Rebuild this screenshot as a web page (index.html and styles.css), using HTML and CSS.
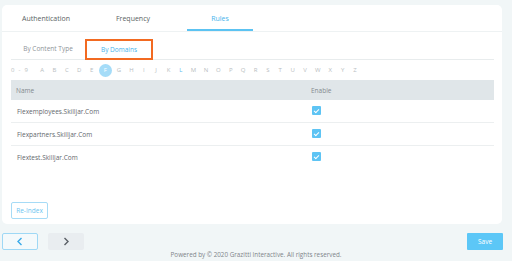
FILE: index.html
```html
<html>
<head>
<meta charset="utf-8">
<link rel="stylesheet" href="styles.css">
</head>
<body>
<div class="card">
	<div class="tabs">
		<div class="tab">Authentication</div>
		<div class="tab">Frequency</div>
		<div class="tab active">Rules</div>
	</div>
	<div class="content">
		<div class="subtabs">
			<div class="subtab">By Content Type</div>
			<div class="subtab current">By Domains</div>
		</div>
		<div class="letters">
			<span class="digits">0 - 9</span>
			<span>A</span><span>B</span><span>C</span><span>D</span><span>E</span>
			<span class="picked">F</span>
			<span>G</span><span>H</span><span>I</span><span>J</span><span>K</span>
			<span class="has">L</span>
			<span>M</span><span>N</span><span>O</span><span>P</span><span>Q</span><span>R</span><span>S</span><span>T</span><span>U</span><span>V</span><span>W</span><span>X</span><span>Y</span><span>Z</span>
		</div>
		<div class="table">
			<div class="row head"><div class="name">Name</div><div class="enable">Enable</div></div>
			<div class="row"><div class="name">Flexemployees.Skilljar.Com</div><div class="enable"><span class="check"></span></div></div>
			<div class="row"><div class="name">Flexpartners.Skilljar.Com</div><div class="enable"><span class="check"></span></div></div>
			<div class="row last"><div class="name">Flextest.Skilljar.Com</div><div class="enable"><span class="check"></span></div></div>
		</div>
		<button class="reindex">Re-Index</button>
	</div>
</div>
<div class="actions">
	<div class="nav">
		<button class="prev"><svg width="8" height="9" viewBox="0 0 8 9"><polyline points="5.5,1 2,4.5 5.5,8" fill="none" stroke="#3aa9e8" stroke-width="1.4"/></svg></button>
		<button class="next"><svg width="8" height="9" viewBox="0 0 8 9"><polyline points="2.5,1 6,4.5 2.5,8" fill="none" stroke="#5a5f66" stroke-width="1.4"/></svg></button>
	</div>
	<button class="save">Save</button>
</div>
<div class="footer">Powered by © 2020 Grazitti Interactive. All rights reserved.</div>
</body>
</html>
```

FILE: styles.css
```css
body {
	margin: 0;
	background-color: #f1f6f7;
	font-family: 'Open Sans', sans-serif;
	font-size: 6.5px;
	color: #5f6469;
}
button {
	font-family: 'Open Sans', sans-serif;
	cursor: pointer;
}

.card {
	display: flex;
	flex-direction: column;
	box-sizing: border-box;
	margin: 5px 0 0 2px;
	width: 500px;
	height: 219px;
	padding-bottom: 5px;
	background-color: #ffffff;
	border-radius: 5px;
}

.tabs {
	display: flex;
	gap: 21px;
	height: 26px;
	padding-left: 11px;
	border-bottom: 1px solid #eef2f3;
}
.tab {
	display: flex;
	align-items: center;
	justify-content: center;
	box-sizing: border-box;
	width: 66px;
	font-size: 7px;
	color: #5a5f64;
}
.tab.active {
	color: #45b3ec;
	border-bottom: 2px solid #5cc3f2;
	padding-top: 2px;
}

.content {
	display: flex;
	flex-direction: column;
	flex: 1;
	padding: 0 8px 0 9px;
}

.subtabs {
	display: flex;
	align-items: flex-end;
	height: 27px;
	border-bottom: 1px solid #e8eced;
}
.subtab {
	display: flex;
	align-items: center;
	justify-content: center;
	box-sizing: border-box;
	width: 74px;
	height: 21px;
	color: #8f9499;
}
.subtab.current {
	width: 68px;
	margin-bottom: -1px;
	border: 2px solid #f26a21;
	color: #45b3ec;
}

.letters {
	display: flex;
	align-items: center;
	height: 20px;
	color: #b8bdc1;
	font-size: 6px;
}
.letters span {
	display: flex;
	align-items: center;
	justify-content: center;
	min-width: 5px;
	margin: 0 3.7px;
}
.letters .digits {
	margin: 0 8px 0 0;
	word-spacing: 2.5px;
}
.letters .picked {
	width: 13px;
	height: 13px;
	margin: 0 1px;
	border-radius: 50%;
	background-color: #a5dcf8;
	color: #ffffff;
}
.letters .has {
	color: #5bbdf0;
}

.table {
	display: flex;
	flex-direction: column;
}
.row {
	display: flex;
	align-items: center;
	height: 22px;
	border-bottom: 1px solid #eceff0;
	color: #63686d;
}
.row.last {
	border-bottom: none;
}
.row.head {
	height: 20px;
	border-bottom: none;
	background-color: #e0e6e9;
	color: #83898e;
}
.name {
	width: 289px;
	padding-left: 6px;
}
.row.head .name {
	padding-left: 5px;
}
.enable {
	display: flex;
	align-items: center;
	padding-left: 6px;
}
.check {
	position: relative;
	width: 9px;
	height: 9px;
	margin-top: -1px;
	border-radius: 1px;
	background-color: #5ec4f4;
}
.check::after {
	content: "";
	position: absolute;
	left: 3px;
	top: 1.5px;
	width: 2px;
	height: 4px;
	border: solid #ffffff;
	border-width: 0 1.2px 1.2px 0;
	transform: rotate(45deg);
}

.reindex {
	align-self: flex-start;
	margin-top: auto;
	width: 37px;
	height: 17px;
	padding: 0;
	background-color: #ffffff;
	border: 1px solid #a6dbf6;
	border-radius: 2px;
	color: #6cc4f0;
	font-size: 6.5px;
}

.actions {
	display: flex;
	justify-content: space-between;
	align-items: center;
	margin: 9px 9px 0 2px;
}
.nav {
	display: flex;
	gap: 10px;
}
.nav button {
	display: flex;
	align-items: center;
	justify-content: center;
	width: 36px;
	height: 17px;
	padding: 0;
	border-radius: 2px;
}
.prev {
	background-color: #f4f9fb;
	border: 1px solid #9fd8f5;
}
.next {
	background-color: #e9edf0;
	border: none;
}
.save {
	width: 36px;
	height: 17px;
	padding: 0;
	border: none;
	border-radius: 1px;
	background-color: #5cc7f7;
	color: #ffffff;
	font-size: 6.5px;
}
.footer {
	text-align: center;
	line-height: 10px;
	color: #80858a;
	font-size: 6.3px;
}
```
